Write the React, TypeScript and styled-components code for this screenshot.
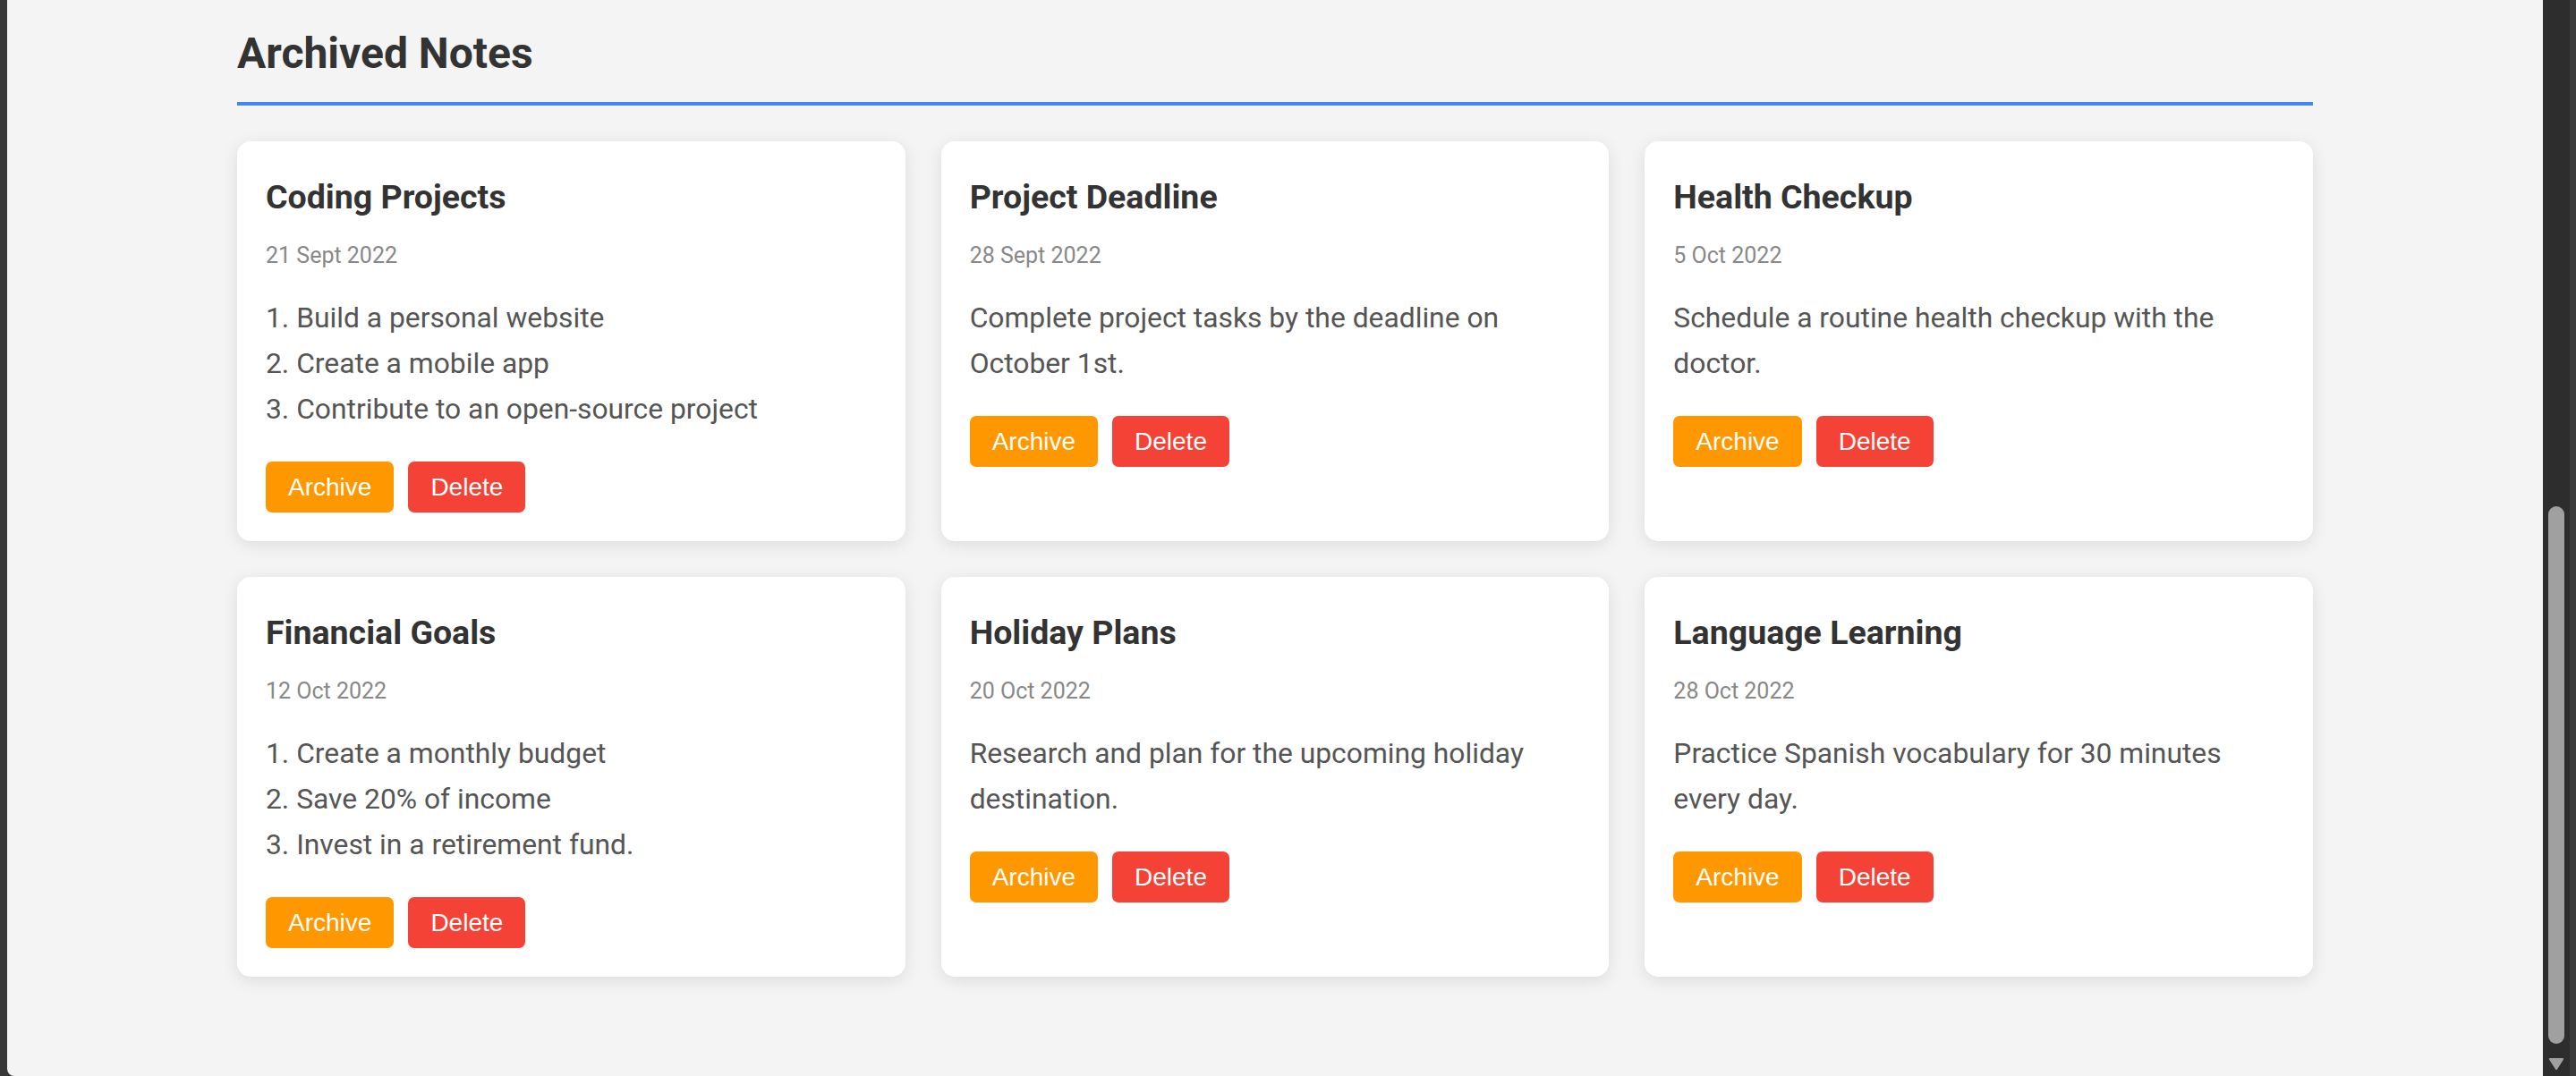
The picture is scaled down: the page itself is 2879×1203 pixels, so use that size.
import React from "react";
import styled, { createGlobalStyle } from "styled-components";

const GlobalStyle = createGlobalStyle`
  html, body {
    margin: 0;
    padding: 0;
    height: 100%;
    overflow: hidden;
  }
  body {
    background: #383838;
    font-family: Roboto, "Liberation Sans", Arial, sans-serif;
  }
  * { box-sizing: border-box; }
`;

const Frame = styled.div`
  display: flex;
  width: 100vw;
  height: 100vh;
  background: #383838;
  padding-left: 8px;
`;

const Main = styled.main`
  flex: 1;
  min-width: 0;
  background: #f4f4f4;
  border-bottom-left-radius: 8px;
  overflow: hidden;
`;

const Container = styled.div`
  max-width: 2320px;
  margin: 0 auto;
  padding-top: 32px;
`;

const Header = styled.h2`
  margin: 0 0 40px;
  padding-bottom: 26px;
  border-bottom: 4px solid #4285f4;
  font-family: Roboto, sans-serif;
  font-weight: 700;
  font-size: 48px;
  line-height: 56px;
  color: #333333;
`;

const Grid = styled.div`
  display: grid;
  grid-template-columns: repeat(3, 1fr);
  gap: 40px;
`;

const Card = styled.article`
  background: #ffffff;
  border-radius: 15px;
  box-shadow: 0 4px 18px rgba(0, 0, 0, 0.1);
  padding: 42px 32px 32px;
  display: flex;
  flex-direction: column;
`;

const Title = styled.h3`
  margin: 0;
  font-family: Roboto, sans-serif;
  font-weight: 700;
  font-size: 37.5px;
  line-height: 40px;
  color: #333333;
`;

const DateText = styled.p`
  margin: 32px 0 0;
  font-family: Roboto, sans-serif;
  font-size: 25px;
  line-height: 28px;
  color: #888888;
`;

const Body = styled.p`
  margin: 30px 0 0;
  font-family: Roboto, sans-serif;
  font-size: 31.8px;
  line-height: 51px;
  color: #555555;
  white-space: pre-line;
`;

const Actions = styled.div`
  display: flex;
  gap: 16px;
  margin-top: 33px;
`;

const ActionButton = styled.button<{ $tone: "archive" | "delete" }>`
  height: 57px;
  padding: 0 25px;
  border: none;
  border-radius: 7px;
  background: ${(p) => (p.$tone === "archive" ? "#ff9800" : "#f44336")};
  color: #ffffff;
  font-family: "Liberation Sans", Arial, sans-serif;
  font-size: 28px;
  cursor: pointer;
`;

const ScrollTrack = styled.div`
  width: 37px;
  display: flex;
  background: #3b3b3b;
`;

const ScrollLane = styled.div`
  width: 30px;
  background: #2d2d2d;
  display: flex;
  flex-direction: column;
  align-items: center;
  padding-top: 566px;
`;

const ScrollThumb = styled.div`
  width: 18px;
  height: 601px;
  border-radius: 9px;
  background: #a0a0a0;
`;

const ArrowDown = styled.svg`
  margin-top: 16px;
  display: block;
`;

type Note = { title: string; date: string; body: string };

const notes: Note[] = [
  {
    title: "Coding Projects",
    date: "21 Sept 2022",
    body: "1. Build a personal website\n2. Create a mobile app\n3. Contribute to an open-source project",
  },
  {
    title: "Project Deadline",
    date: "28 Sept 2022",
    body: "Complete project tasks by the deadline on October 1st.",
  },
  {
    title: "Health Checkup",
    date: "5 Oct 2022",
    body: "Schedule a routine health checkup with the doctor.",
  },
  {
    title: "Financial Goals",
    date: "12 Oct 2022",
    body: "1. Create a monthly budget\n2. Save 20% of income\n3. Invest in a retirement fund.",
  },
  {
    title: "Holiday Plans",
    date: "20 Oct 2022",
    body: "Research and plan for the upcoming holiday destination.",
  },
  {
    title: "Language Learning",
    date: "28 Oct 2022",
    body: "Practice Spanish vocabulary for 30 minutes every day.",
  },
];

export default function App() {
  return (
    <>
      <GlobalStyle />
      <Frame>
        <Main>
          <Container>
            <Header>Archived Notes</Header>
            <Grid>
              {notes.map((n) => (
                <Card key={n.title}>
                  <Title>{n.title}</Title>
                  <DateText>{n.date}</DateText>
                  <Body>{n.body}</Body>
                  <Actions>
                    <ActionButton $tone="archive">Archive</ActionButton>
                    <ActionButton $tone="delete">Delete</ActionButton>
                  </Actions>
                </Card>
              ))}
            </Grid>
          </Container>
        </Main>
        <ScrollTrack>
          <ScrollLane>
            <ScrollThumb />
            <ArrowDown width="18" height="14" viewBox="0 0 18 14">
              <path d="M1 1.5 Q0 0 2 0 H16 Q18 0 17 1.5 L10 12.5 Q9 14 8 12.5 Z" fill="#a0a0a0" />
            </ArrowDown>
          </ScrollLane>
        </ScrollTrack>
      </Frame>
    </>
  );
}
